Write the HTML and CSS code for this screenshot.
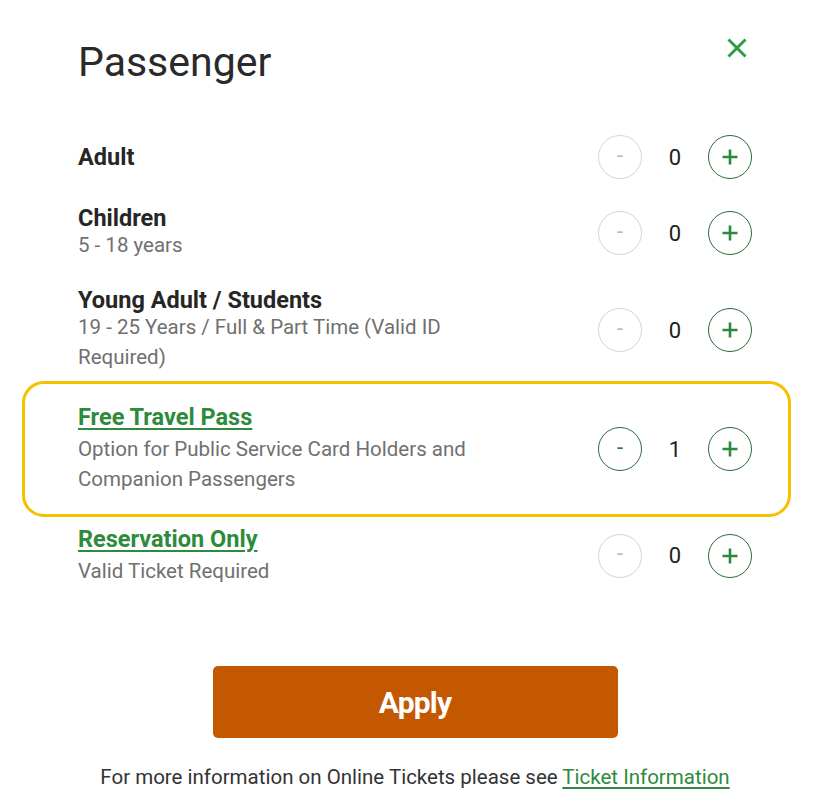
FILE: index.html
```html
<!DOCTYPE html>
<html lang="en">
<head>
<meta charset="utf-8">
<title>Passenger</title>
<link rel="stylesheet" href="styles.css">
</head>
<body>
<div class="modal">
  <header class="head">
    <h1 class="title">Passenger</h1>
    <button class="close" aria-label="Close">
      <svg viewBox="0 0 20 20" width="20" height="20"><path d="M1.5 1.5 L18.5 18.5 M18.5 1.5 L1.5 18.5" stroke="#2f9d44" stroke-width="3" fill="none"/></svg>
    </button>
  </header>

  <div class="rows">
    <div class="row">
      <div class="info"><div class="name">Adult</div></div>
      <div class="counter">
        <button class="step minus off">-</button>
        <span class="count">0</span>
        <button class="step plus"><svg viewBox="0 0 18 18" width="18" height="18"><path d="M9 1.5 V16.5 M1.5 9 H16.5" stroke="#2a8a3a" stroke-width="2.6" fill="none"/></svg></button>
      </div>
    </div>

    <div class="row">
      <div class="info"><div class="name">Children</div><div class="sub">5 - 18 years</div></div>
      <div class="counter">
        <button class="step minus off">-</button>
        <span class="count">0</span>
        <button class="step plus"><svg viewBox="0 0 18 18" width="18" height="18"><path d="M9 1.5 V16.5 M1.5 9 H16.5" stroke="#2a8a3a" stroke-width="2.6" fill="none"/></svg></button>
      </div>
    </div>

    <div class="row">
      <div class="info"><div class="name">Young Adult / Students</div><div class="sub">19 - 25 Years / Full &amp; Part Time (Valid ID Required)</div></div>
      <div class="counter">
        <button class="step minus off">-</button>
        <span class="count">0</span>
        <button class="step plus"><svg viewBox="0 0 18 18" width="18" height="18"><path d="M9 1.5 V16.5 M1.5 9 H16.5" stroke="#2a8a3a" stroke-width="2.6" fill="none"/></svg></button>
      </div>
    </div>

    <div class="row linked highlight">
      <div class="info"><a class="name link" href="#">Free Travel Pass</a><div class="sub">Option for Public Service Card Holders and Companion Passengers</div></div>
      <div class="counter">
        <button class="step minus">-</button>
        <span class="count">1</span>
        <button class="step plus"><svg viewBox="0 0 18 18" width="18" height="18"><path d="M9 1.5 V16.5 M1.5 9 H16.5" stroke="#2a8a3a" stroke-width="2.6" fill="none"/></svg></button>
      </div>
    </div>

    <div class="row linked">
      <div class="info"><a class="name link" href="#">Reservation Only</a><div class="sub">Valid Ticket Required</div></div>
      <div class="counter">
        <button class="step minus off">-</button>
        <span class="count">0</span>
        <button class="step plus"><svg viewBox="0 0 18 18" width="18" height="18"><path d="M9 1.5 V16.5 M1.5 9 H16.5" stroke="#2a8a3a" stroke-width="2.6" fill="none"/></svg></button>
      </div>
    </div>
  </div>

  <div class="actions">
    <button class="apply">Apply</button>
    <p class="more">For more information on Online Tickets please see <a href="#">Ticket Information</a></p>
  </div>
</div>
</body>
</html>
```

FILE: styles.css
```css
* { box-sizing: border-box; }
html, body { margin: 0; padding: 0; background: #fff; }
body { font-family: Roboto, "Liberation Sans", sans-serif; color: #262626; }

.modal { width: 827px; padding: 39px 75px 0 78px; }

.head { display: flex; justify-content: space-between; align-items: flex-start; }
.title { margin: 0; font-size: 41px; font-weight: 400; line-height: 46px; color: #2a2a2a; }
.close { border: 0; background: none; padding: 0; margin: -1px 5px 0 0; width: 20px; height: 20px; }
.close svg { display: block; }

.rows { display: flex; flex-direction: column; gap: 27px; margin-top: 50px; }
.row { position: relative; display: flex; justify-content: space-between; align-items: center; }
.info { width: 420px; display: flex; flex-direction: column; align-items: flex-start; }
.name { font-size: 23.5px; font-weight: 700; line-height: 24px; color: #262626; }
.link { color: #2e8a3c; text-decoration: underline; text-decoration-thickness: 2px; text-underline-offset: 3px; margin: 5px 0 5px; }
.sub { font-size: 20.5px; line-height: 30.5px; color: #707070; }
.linked .counter { margin-top: 4px; }

.highlight::before {
  content: ""; position: absolute; left: -56px; right: -39px; top: -19px; bottom: -22.5px;
  border: 3px solid #f6c000; border-radius: 22px; pointer-events: none;
}

.counter { display: flex; align-items: center; }
.step {
  width: 44px; height: 44px; border-radius: 50%; background: #fff; padding: 0;
  display: flex; align-items: center; justify-content: center;
  font-family: Roboto, "Liberation Sans", sans-serif;
}
.minus { border: 1.4px solid #2c6b38; color: #2a7a38; font-size: 22px; line-height: 1; padding-bottom: 3px; }
.minus.off { border-color: #c9dcc9; color: #b8b8b8; }
.plus { border: 1.4px solid #2c6b38; }
.plus svg { display: block; }
.count { width: 66px; text-align: center; font-size: 22px; color: #1e1e1e; }

.actions { display: flex; flex-direction: column; align-items: center; margin-top: 80px; }
.apply {
  width: 405px; height: 72px; border: 0; border-radius: 5px; background: #c45800; color: #fff;
  font-family: Roboto, "Liberation Sans", sans-serif; font-size: 30px; font-weight: 700; letter-spacing: -0.8px;
}
.more { margin: 27px 0 0; font-size: 20.5px; line-height: 24px; color: #333; }
.more a { color: #2e8a3c; text-decoration: underline; text-underline-offset: 3px; }
```
